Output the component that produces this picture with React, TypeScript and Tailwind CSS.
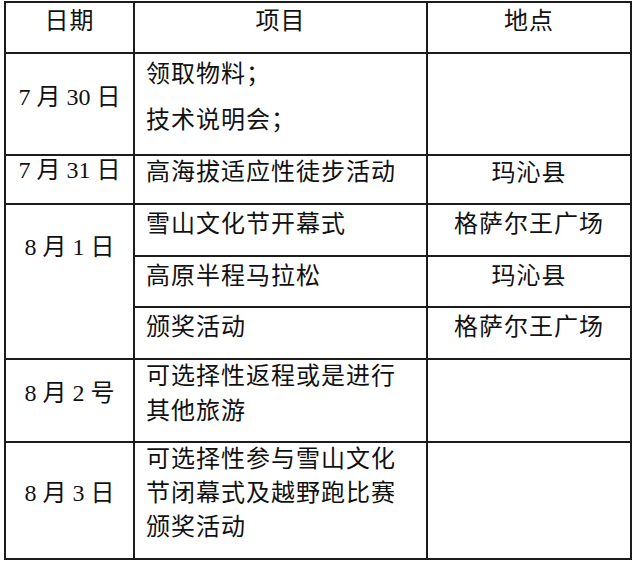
import React from 'react';

const cell = 'border-r-2 border-b-2 border-[#1c1c1c] text-[24px] tracking-[1px] text-[#111]';
const date = "border-r-2 border-b-2 border-[#1c1c1c] text-[24px] text-[#111] text-center leading-[32px] [font-family:'Liberation_Serif','Times_New_Roman','Noto_Sans_CJK_SC',serif]";

const App: React.FC = () => {
  return (
    <div className="w-[640px] h-[565px] bg-white pt-px pl-1">
      <div className="grid grid-cols-[129px_293px_204px] grid-rows-[51px_102px_49px_52px_51px_52px_83px_117px] w-[628px] border-l-2 border-t-2 border-[#1c1c1c] [font-family:'Noto_Sans_CJK_SC',sans-serif]">
        {/* header */}
        <div className={`${cell} text-center leading-[32px]`}>日期</div>
        <div className={`${cell} text-center leading-[32px]`}>项目</div>
        <div className={`${cell} text-center leading-[32px]`}>地点</div>

        {/* 7/30 */}
        <div className={`${date} pt-[27px]`}>7 月 30 日</div>
        <div className={`${cell} pl-[11px] pt-[2px] leading-[32px]`}>
          <p className="mb-[14px]">领取物料；</p>
          <p>技术说明会；</p>
        </div>
        <div className={cell}></div>

        {/* 7/31 */}
        <div className={`${date} !leading-[28px]`}>7 月 31 日</div>
        <div className={`${cell} pl-[11px] leading-[28px]`}>高海拔适应性徒步活动</div>
        <div className={`${cell} text-center leading-[30px]`}>玛沁县</div>

        {/* 8/1 */}
        <div className={`${date} row-span-3 pt-[26px]`}>8 月 1 日</div>
        <div className={`${cell} pl-[11px] pt-px leading-[32px]`}>雪山文化节开幕式</div>
        <div className={`${cell} text-center pt-px leading-[32px]`}>格萨尔王广场</div>
        <div className={`${cell} pl-[11px] pt-px leading-[32px]`}>高原半程马拉松</div>
        <div className={`${cell} text-center pt-px leading-[32px]`}>玛沁县</div>
        <div className={`${cell} pl-[11px] pt-px leading-[32px]`}>颁奖活动</div>
        <div className={`${cell} text-center pt-px leading-[32px]`}>格萨尔王广场</div>

        {/* 8/2 */}
        <div className={`${date} pt-[17px]`}>8 月 2 号</div>
        <div className={`${cell} pl-[11px] leading-[35px]`}>
          <div className="-mt-[4px]">
            可选择性返程或是进行
            <br />
            其他旅游
          </div>
        </div>
        <div className={cell}></div>

        {/* 8/3 */}
        <div className={`${date} pt-[34px]`}>8 月 3 日</div>
        <div className={`${cell} pl-[11px] leading-[34px]`}>
          <div className="-mt-[3px]">
            可选择性参与雪山文化
            <br />
            节闭幕式及越野跑比赛
            <br />
            颁奖活动
          </div>
        </div>
        <div className={cell}></div>
      </div>
    </div>
  );
};

export default App;
